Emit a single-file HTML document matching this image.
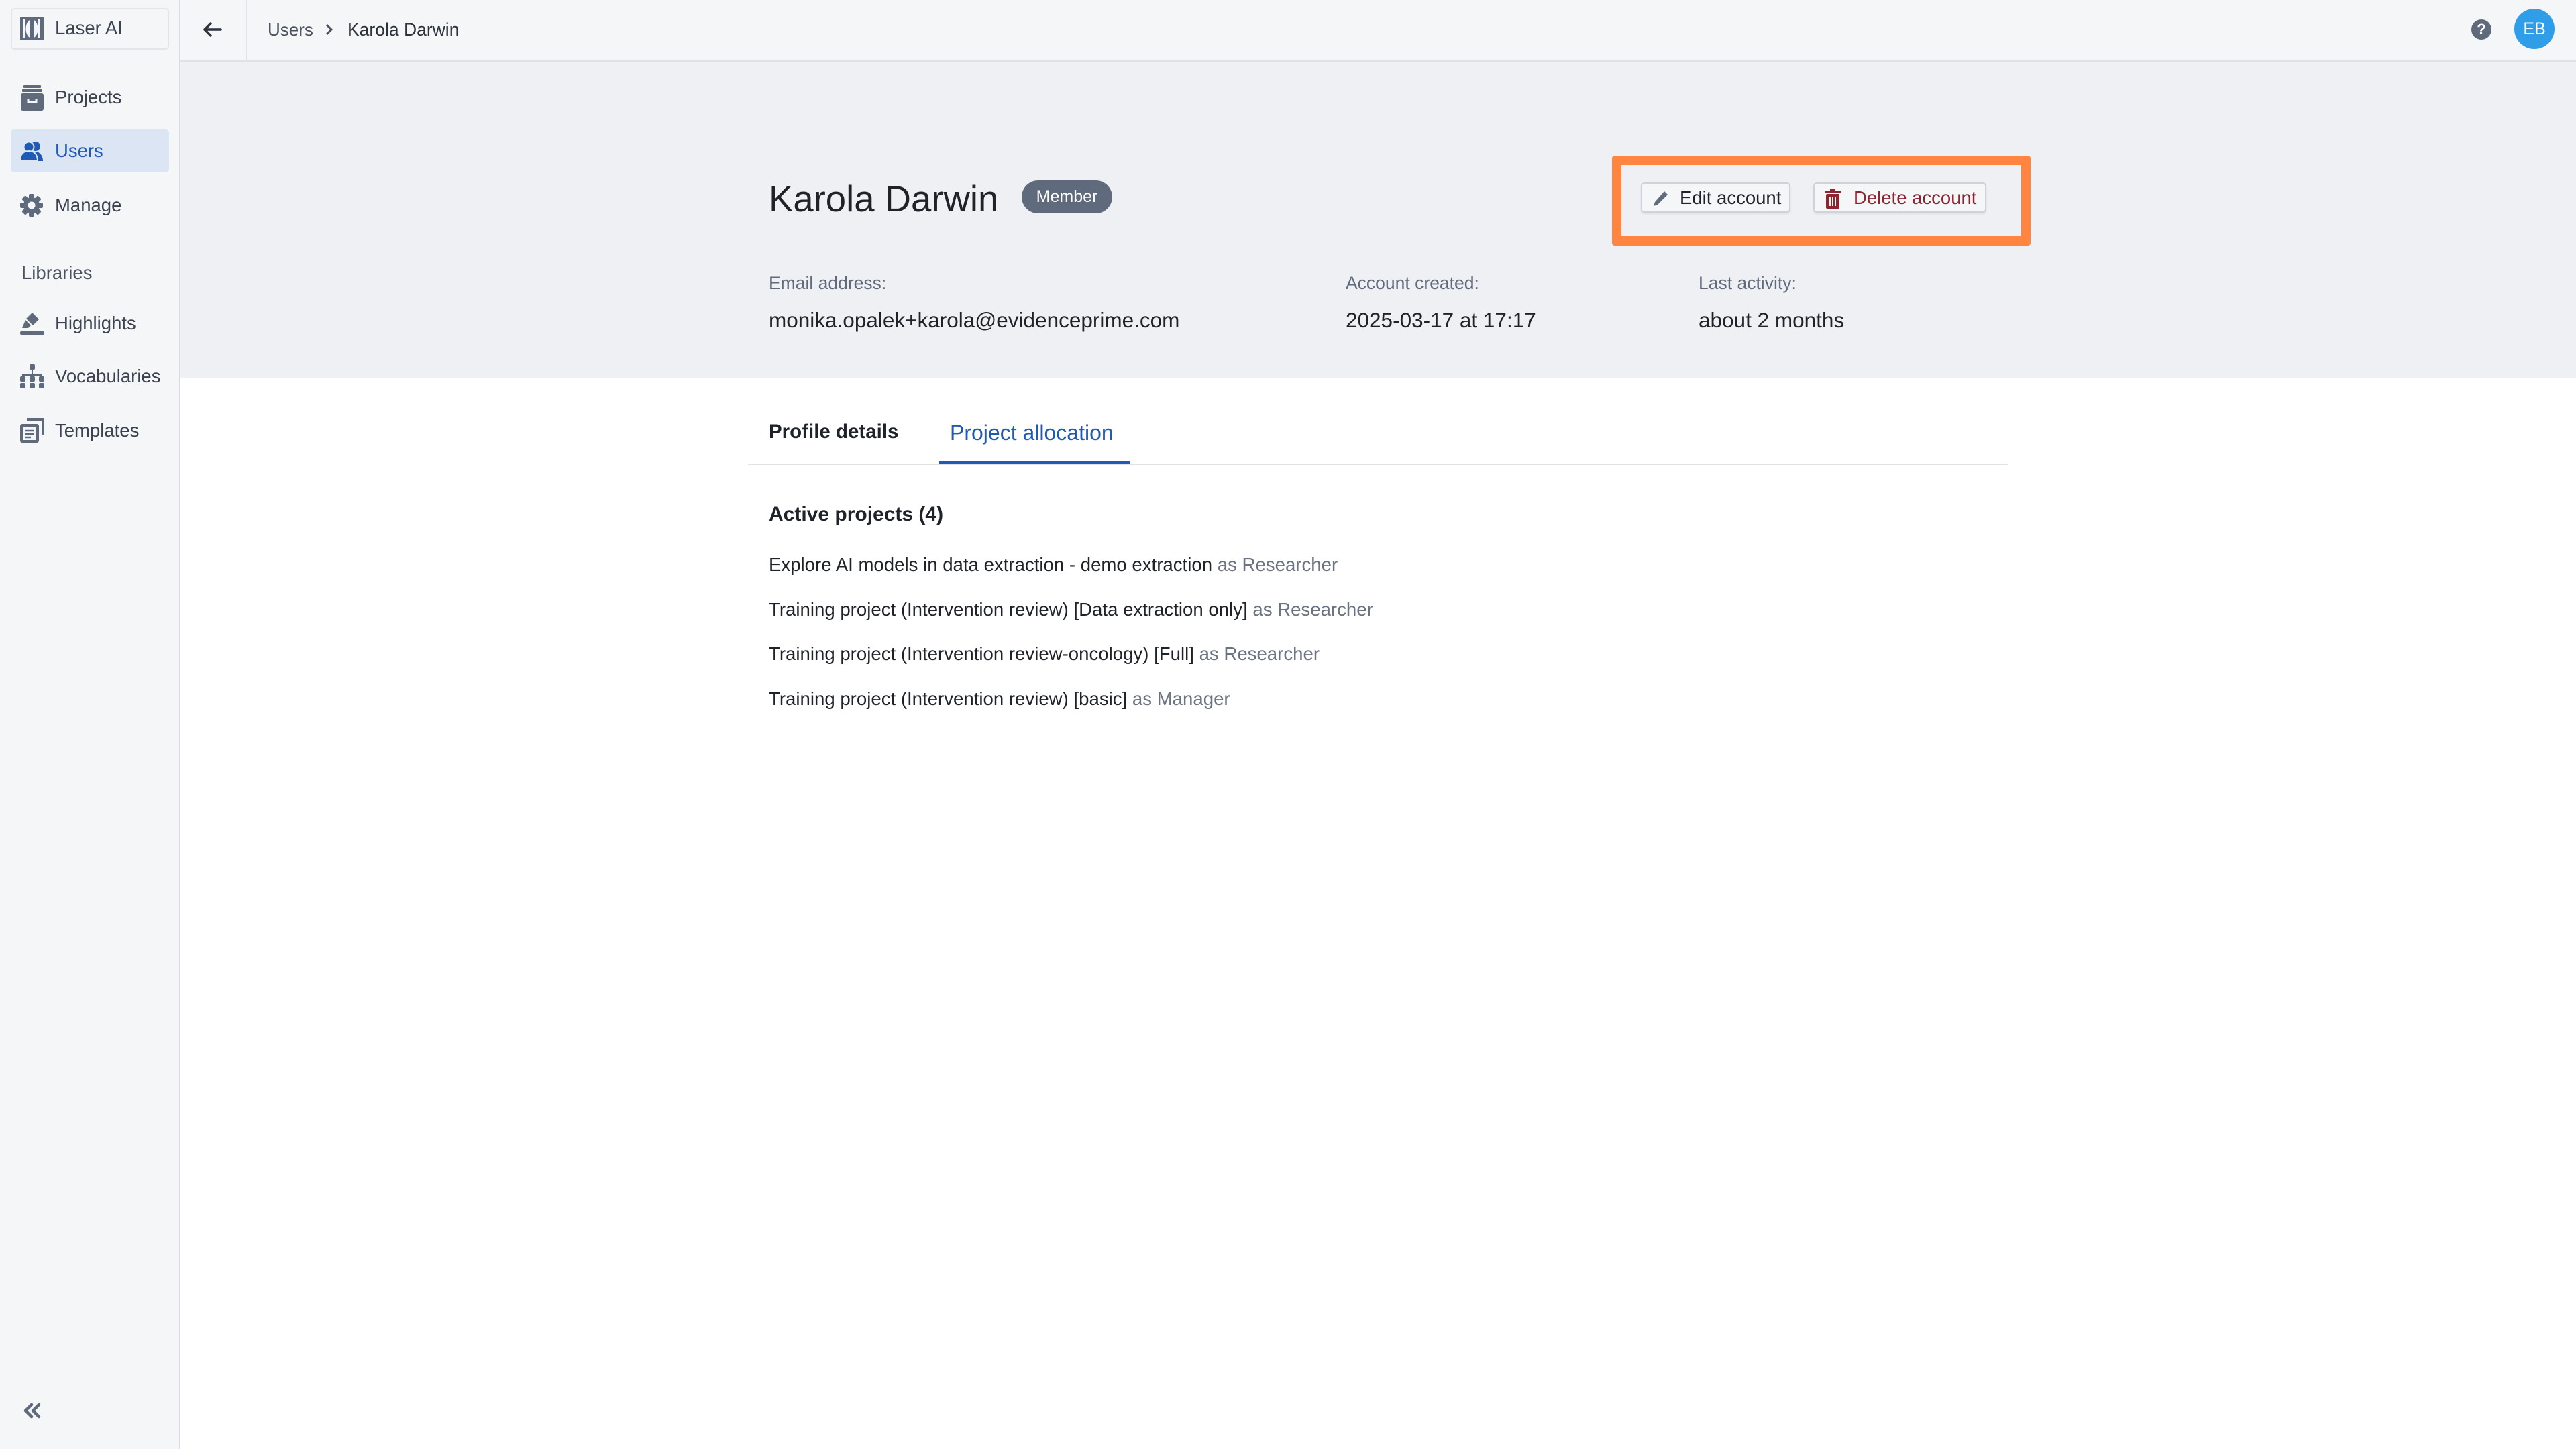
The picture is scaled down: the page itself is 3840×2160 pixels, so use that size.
<!DOCTYPE html>
<html><head><meta charset="utf-8"><style>
*{margin:0;padding:0;box-sizing:border-box}
body{width:3840px;height:2160px;position:relative;overflow:hidden;background:#fff;font-family:"Liberation Sans",sans-serif;color:#1f2329}
.a{position:absolute;white-space:nowrap}
#side{position:absolute;left:0;top:0;width:269px;height:2160px;background:#f5f6f8;border-right:2px solid #d9dce2}
#top{position:absolute;left:269px;top:0;right:0;height:92px;background:#f5f6f8;border-bottom:2px solid #dfe2e7}
#hdr{position:absolute;left:269px;top:92px;right:0;height:471px;background:#eef0f4}
.nav{font-size:27.5px;color:#3b4350}
.ic{position:absolute}
.btn{position:absolute;height:45px;top:272px;background:#f5f6f8;border:2px solid #cfd2d7;border-radius:5px;box-shadow:0 2px 3px rgba(0,0,0,.08);font-size:27.5px;line-height:41px}
.lbl{font-size:26.5px;color:#5f6b7d}
.val{font-size:31.5px;color:#1f2329}
.pl{font-size:27.6px;color:#1f2329}
.pl span{color:#6b7280}
</style></head><body>
<div id="side">
  <div class="a" style="left:16px;top:12px;width:236px;height:62px;border:2px solid #e3e5e9;border-radius:5px;background:#f5f6f8"></div>
  <svg class="ic" style="left:30px;top:26px" width="35" height="34" viewBox="0 0 35 34"><rect x="0" y="0" width="35" height="34" fill="#5f6b7d"/><ellipse cx="17.5" cy="17" rx="9" ry="14" fill="#f5f6f8"/><rect x="14" y="0" width="7" height="34" fill="#5f6b7d"/><rect x="5" y="3" width="3" height="28" fill="#f5f6f8"/><rect x="27" y="3" width="3" height="28" fill="#f5f6f8"/></svg>
  <div class="a" style="left:82px;top:26px;font-size:27.5px;color:#3b4350">Laser AI</div>

  <svg class="ic" style="left:31px;top:127px" width="34" height="38" viewBox="0 0 34 38"><rect x="4" y="0" width="26" height="4" rx="1" fill="#5f6b7d"/><rect x="2" y="6" width="30" height="4" rx="1" fill="#5f6b7d"/><rect x="0" y="12" width="34" height="26" rx="3" fill="#5f6b7d"/><path d="M11 20v5h12v-5" stroke="#f5f6f8" stroke-width="3" fill="none"/></svg>
  <div class="a nav" style="left:82px;top:129px">Projects</div>

  <div class="a" style="left:16px;top:193px;width:236px;height:64px;background:#dbe5f3;border-radius:5px"></div>
  <svg class="ic" style="left:30px;top:210px" width="36" height="30" viewBox="0 0 36 30"><circle cx="23" cy="8" r="7" fill="#1f5bb5"/><path d="M14 30c0-9 4-14 9-14s11 5 11 14z" fill="#1f5bb5"/><circle cx="13" cy="9" r="7.5" stroke="#dbe5f3" stroke-width="2" fill="#1f5bb5"/><path d="M0 30c0-10 5-15 13-15s13 5 13 15z" fill="#1f5bb5" stroke="#dbe5f3" stroke-width="2"/></svg>
  <div class="a nav" style="left:82px;top:209px;color:#1f5bb5">Users</div>

  <svg class="ic" style="left:30px;top:289px" width="34" height="34" viewBox="0 0 34 34"><g fill="#5f6b7d"><circle cx="17" cy="17" r="12"/><rect x="13" y="0" width="8" height="34" rx="2"/><rect x="0" y="13" width="34" height="8" rx="2"/><rect x="13" y="0" width="8" height="34" rx="2" transform="rotate(45 17 17)"/><rect x="13" y="0" width="8" height="34" rx="2" transform="rotate(-45 17 17)"/></g><circle cx="17" cy="17" r="5.5" fill="#f5f6f8"/></svg>
  <div class="a nav" style="left:82px;top:290px">Manage</div>

  <div class="a" style="left:32px;top:391px;font-size:27.5px;color:#4a5260">Libraries</div>

  <svg class="ic" style="left:30px;top:463px" width="36" height="36" viewBox="0 0 36 36"><path d="M18 3l10 10-9 9-10-10z" fill="#5f6b7d"/><path d="M8 14l8 8-4 4H3z" fill="#5f6b7d"/><rect x="0" y="31" width="36" height="5" rx="2" fill="#5f6b7d"/></svg>
  <div class="a nav" style="left:82px;top:466px">Highlights</div>

  <svg class="ic" style="left:30px;top:543px" width="36" height="36" viewBox="0 0 36 36"><g fill="#5f6b7d"><rect x="14" y="0" width="8" height="8" rx="2"/><rect x="17" y="8" width="2" height="8"/><rect x="3" y="14" width="30" height="3"/><rect x="0" y="18" width="8" height="8" rx="2"/><rect x="14" y="18" width="8" height="8" rx="2"/><rect x="28" y="18" width="8" height="8" rx="2"/><rect x="0" y="28" width="8" height="8" rx="2"/><rect x="14" y="28" width="8" height="8" rx="2"/><rect x="28" y="28" width="8" height="8" rx="2"/></g></svg>
  <div class="a nav" style="left:82px;top:545px">Vocabularies</div>

  <svg class="ic" style="left:30px;top:623px" width="36" height="37" viewBox="0 0 36 37"><path d="M10 0h26v26h-4V4H10z" fill="#5f6b7d"/><rect x="0" y="9" width="28" height="28" rx="3" fill="#5f6b7d"/><rect x="4" y="14" width="20" height="19" fill="#f5f6f8"/><path d="M7 19h14M7 24h14M7 29h9" stroke="#5f6b7d" stroke-width="2.5"/></svg>
  <div class="a nav" style="left:82px;top:626px">Templates</div>

  <svg class="ic" style="left:35px;top:2091px" width="26" height="24" viewBox="0 0 26 24"><path d="M12 3L3 12l9 9M23 3l-9 9 9 9" stroke="#5f6b7d" stroke-width="4.5" fill="none" stroke-linecap="round" stroke-linejoin="round"/></svg>
</div>

<div id="top">
  <svg class="ic" style="left:32px;top:32px" width="30" height="24" viewBox="0 0 30 24"><path d="M28 12H4M13 3l-9 9 9 9" stroke="#2d333d" stroke-width="3.5" fill="none" stroke-linecap="round" stroke-linejoin="round"/></svg>
  <div class="a" style="left:97px;top:0;width:2px;height:90px;background:#e3e5e9"></div>
  <div class="a" style="left:130px;top:29px;font-size:26px;color:#4a5260">Users</div>
  <svg class="ic" style="left:215px;top:34px" width="12" height="20" viewBox="0 0 12 20"><path d="M3 3l7 7-7 7" stroke="#4a5260" stroke-width="3" fill="none"/></svg>
  <div class="a" style="left:249px;top:29px;font-size:26.5px;color:#2d333d">Karola Darwin</div>
  <div class="a" style="left:3415px;top:29px;width:30px;height:30px;border-radius:50%;background:#5f6b7d;color:#fff;font-size:22px;font-weight:bold;text-align:center;line-height:30px">?</div>
  <div class="a" style="left:3479px;top:13px;width:60px;height:60px;border-radius:50%;background:#2f9de8;color:#fff;font-size:25px;text-align:center;line-height:60px">EB</div>
</div>

<div id="hdr"></div>
<div class="a" style="left:1146px;top:265px;font-size:54.5px;color:#1f2329">Karola Darwin</div>
<div class="a" style="left:1523px;top:269px;width:135px;height:49px;border-radius:25px;background:#5f6b7d;color:#fff;font-size:25px;text-align:center;line-height:49px">Member</div>

<div class="a" style="left:2403px;top:232px;width:624px;height:134px;border:14px solid #ff8540;border-radius:4px"></div>
<div class="btn" style="left:2446px;width:223px">
  <svg class="ic" style="left:14px;top:9px" width="26" height="26" viewBox="0 0 26 26"><path d="M19 2l5 5L9 22l-6 2 2-6z" fill="#5f6b7d"/></svg>
  <span class="a" style="left:56px;top:0;color:#1f2329">Edit account</span>
</div>
<div class="btn" style="left:2703px;width:258px">
  <svg class="ic" style="left:14px;top:7px" width="26" height="30" viewBox="0 0 26 30"><rect x="9" y="0" width="8" height="3" fill="#8b2530"/><rect x="1" y="3" width="24" height="4" fill="#8b2530"/><rect x="3" y="8" width="20" height="22" rx="2" fill="#8b2530"/><path d="M9 12v14M13 12v14M17 12v14" stroke="#f5f6f8" stroke-width="2"/></svg>
  <span class="a" style="left:58px;top:0;color:#8b2530">Delete account</span>
</div>

<div class="a lbl" style="left:1146px;top:407px">Email address:</div>
<div class="a lbl" style="left:2006px;top:407px">Account created:</div>
<div class="a lbl" style="left:2532px;top:407px">Last activity:</div>
<div class="a val" style="left:1146px;top:459px">monika.opalek+karola@evidenceprime.com</div>
<div class="a val" style="left:2006px;top:459px">2025-03-17 at 17:17</div>
<div class="a val" style="left:2532px;top:459px">about 2 months</div>

<div class="a" style="left:1146px;top:627px;font-size:29.5px;font-weight:600;color:#1f2329">Profile details</div>
<div class="a" style="left:1416px;top:627px;font-size:32px;color:#1f5bb5">Project allocation</div>
<div class="a" style="left:1115px;top:691px;width:1878px;height:2px;background:#dfe2e7"></div>
<div class="a" style="left:1400px;top:687px;width:285px;height:5px;background:#1f5bb5"></div>

<div class="a" style="left:1146px;top:750px;font-size:30px;font-weight:bold;color:#1f2329">Active projects (4)</div>
<div class="a pl" style="left:1146px;top:826px">Explore AI models in data extraction - demo extraction <span>as Researcher</span></div>
<div class="a pl" style="left:1146px;top:893px">Training project (Intervention review) [Data extraction only] <span>as Researcher</span></div>
<div class="a pl" style="left:1146px;top:959px">Training project (Intervention review-oncology) [Full] <span>as Researcher</span></div>
<div class="a pl" style="left:1146px;top:1026px">Training project (Intervention review) [basic] <span>as Manager</span></div>
</body></html>
